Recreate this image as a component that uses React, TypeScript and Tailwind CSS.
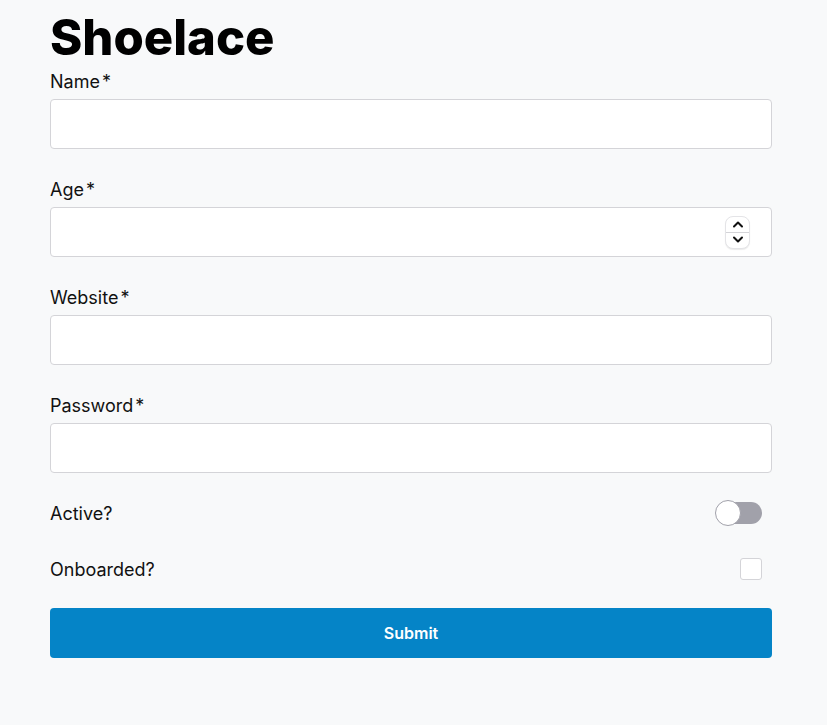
import React from 'react';

function Field({ label, children }: { label: string; children: React.ReactNode }) {
  return (
    <div className="mb-[28px]">
      <label className="mb-[5px] block h-[25px] pt-[1px] text-[18px] leading-6 text-[#111]">
        {label}
        <span className="ml-[2px]">*</span>
      </label>
      {children}
    </div>
  );
}

function TextBox({ stepper }: { stepper?: boolean }) {
  return (
    <div className="flex h-[50px] w-full items-center rounded-[4px] border border-[#d4d4d8] bg-white pr-[21px]">
      <input className="h-full flex-1 bg-transparent px-4 outline-none" />
      {stepper && (
        <div className="flex h-[33px] w-[25px] flex-col overflow-hidden rounded-[8px] border border-[#e4e4e7] bg-white shadow-[0_1px_1px_rgba(0,0,0,0.08)]">
          <div className="flex flex-1 items-center justify-center border-b border-[#d4d4d8]">
            <svg width="12" height="8" viewBox="0 0 12 8" fill="none">
              <path d="M2 6.5L6 2.5L10 6.5" stroke="#111" strokeWidth="2" strokeLinecap="round" strokeLinejoin="round" />
            </svg>
          </div>
          <div className="flex flex-1 items-center justify-center">
            <svg width="12" height="8" viewBox="0 0 12 8" fill="none">
              <path d="M2 1.5L6 5.5L10 1.5" stroke="#111" strokeWidth="2" strokeLinecap="round" strokeLinejoin="round" />
            </svg>
          </div>
        </div>
      )}
    </div>
  );
}

export default function App() {
  return (
    <div className="min-h-[725px] bg-[#f8f9fa] font-['Inter',sans-serif] text-[#111]">
      <div className="ml-[50px] w-[722px] pt-[7px]">
        <h1 className="h-[62px] text-[49px] font-extrabold leading-[62px] text-black">Shoelace</h1>
        <Field label="Name">
          <TextBox />
        </Field>
        <Field label="Age">
          <TextBox stepper />
        </Field>
        <Field label="Website">
          <TextBox />
        </Field>
        <Field label="Password">
          <TextBox />
        </Field>
        <div className="mt-[-1px] flex h-[26px] items-center justify-between pr-[10px]">
          <span className="text-[18px]">Active?</span>
          <div className="relative h-[22px] w-[46px] rounded-full bg-[#a1a1aa]">
            <div className="absolute left-[-1px] top-[-2px] h-[26px] w-[26px] rounded-full border border-[#a1a1aa] bg-white" />
          </div>
        </div>
        <div className="mt-[32px] flex h-[22px] items-center justify-between pr-[10px]">
          <span className="text-[18px]">Onboarded?</span>
          <div className="h-[22px] w-[22px] rounded-[3px] border border-[#d4d4d8] bg-white" />
        </div>
        <button className="mt-[28px] flex h-[50px] w-full items-center justify-center rounded-[4px] bg-[#0584c7] text-base font-semibold text-white">
          Submit
        </button>
      </div>
    </div>
  );
}
